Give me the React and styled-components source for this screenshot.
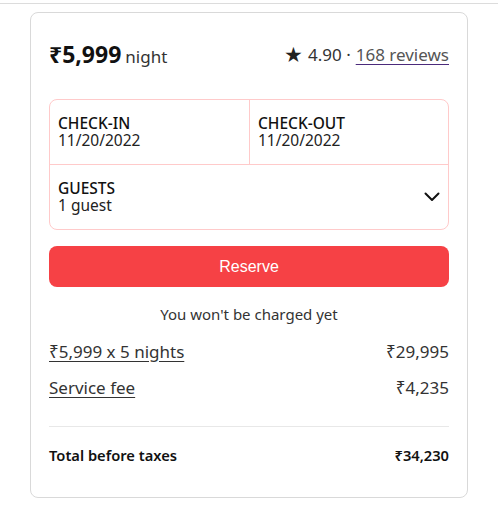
import React from 'react';
import styled, { createGlobalStyle } from 'styled-components';

const GlobalStyle = createGlobalStyle`
  body {
    margin: 0;
    background: #fff;
    font-family: 'Noto Sans', 'Open Sans', sans-serif;
    color: #222;
  }
`;

const TopRule = styled.div`
  width: 498px;
  height: 3px;
  border-bottom: 1px solid #dcdcdc;
`;

const Page = styled.div`
  padding: 8px 0 0 30px;
`;

const Card = styled.div`
  box-sizing: border-box;
  width: 438px;
  height: 486px;
  border: 1px solid #d9d9d9;
  border-radius: 8px;
  padding: 0 18px;
  display: flex;
  flex-direction: column;
`;

const Header = styled.div`
  height: 82px;
  margin-bottom: 4px;
  display: flex;
  align-items: center;
  justify-content: space-between;
`;

const Price = styled.div`
  display: flex;
  align-items: baseline;
  gap: 4px;
  b {
    font-size: 23px;
    font-weight: 700;
    color: #111;
  }
  span {
    font-size: 17px;
    color: #333;
  }
`;

const Rating = styled.div`
  display: flex;
  align-items: center;
  gap: 5px;
  font-size: 17px;
  color: #333;
  i {
    font-style: normal;
    font-size: 21px;
    line-height: 1;
    color: #222;
  }
  a {
    color: #555;
    text-decoration: underline;
    text-decoration-color: #4b2a7b;
    text-underline-offset: 3px;
  }
`;

const Picker = styled.div`
  border: 1px solid #ffcaca;
  border-radius: 8px;
`;

const DateRow = styled.div`
  display: grid;
  grid-template-columns: 1fr 1fr;
  border-bottom: 1px solid #ffcaca;
`;

const Cell = styled.div`
  height: 64px;
  padding: 0 8px;
  display: flex;
  flex-direction: column;
  justify-content: center;
  & + & {
    border-left: 1px solid #ffcaca;
  }
`;

const GuestCell = styled(Cell)`
  flex-direction: row;
  align-items: center;
  justify-content: space-between;
  padding-right: 8px;
`;

const Label = styled.div`
  font-size: 15.5px;
  font-weight: 500;
  line-height: 17px;
  color: #111;
`;

const Value = styled.div`
  font-size: 15.5px;
  line-height: 17px;
  color: #222;
`;

const ReserveButton = styled.button`
  margin-top: 16px;
  height: 41px;
  border: none;
  border-radius: 8px;
  background: #f64145;
  color: #fff;
  font-family: 'Liberation Sans', Arial, sans-serif;
  font-size: 16px;
  cursor: pointer;
`;

const Note = styled.div`
  margin-top: 17px;
  text-align: center;
  font-size: 15px;
  color: #333;
`;

const Line = styled.div`
  display: flex;
  justify-content: space-between;
  align-items: center;
  height: 36px;
  font-size: 17px;
  color: #333;
  u {
    text-underline-offset: 3px;
  }
`;

const Lines = styled.div`
  margin-top: 9px;
`;

const Divider = styled.div`
  margin-top: 21px;
  border-top: 1px solid #e8e8e8;
`;

const Total = styled.div`
  height: 56px;
  display: flex;
  justify-content: space-between;
  align-items: center;
  font-size: 14.7px;
  font-weight: 600;
  color: #111;
`;

const Chevron = () => (
  <svg width="16" height="10" viewBox="0 0 16 10" fill="none">
    <path d="M1.5 1.5 L8 8 L14.5 1.5" stroke="#111" strokeWidth="2" strokeLinecap="round" strokeLinejoin="round" />
  </svg>
);

export default function App() {
  return (
    <>
      <GlobalStyle />
      <TopRule />
      <Page>
        <Card>
          <Header>
            <Price>
              <b>₹5,999</b>
              <span>night</span>
            </Price>
            <Rating>
              <i>★</i>
              <span>4.90 ·</span>
              <a href="#reviews">168 reviews</a>
            </Rating>
          </Header>
          <Picker>
            <DateRow>
              <Cell>
                <Label>CHECK-IN</Label>
                <Value>11/20/2022</Value>
              </Cell>
              <Cell>
                <Label>CHECK-OUT</Label>
                <Value>11/20/2022</Value>
              </Cell>
            </DateRow>
            <GuestCell>
              <div>
                <Label>GUESTS</Label>
                <Value>1 guest</Value>
              </div>
              <Chevron />
            </GuestCell>
          </Picker>
          <ReserveButton>Reserve</ReserveButton>
          <Note>You won't be charged yet</Note>
          <Lines>
            <Line>
              <u>₹5,999 x 5 nights</u>
              <span>₹29,995</span>
            </Line>
            <Line>
              <u>Service fee</u>
              <span>₹4,235</span>
            </Line>
          </Lines>
          <Divider />
          <Total>
            <span>Total before taxes</span>
            <span>₹34,230</span>
          </Total>
        </Card>
      </Page>
    </>
  );
}
